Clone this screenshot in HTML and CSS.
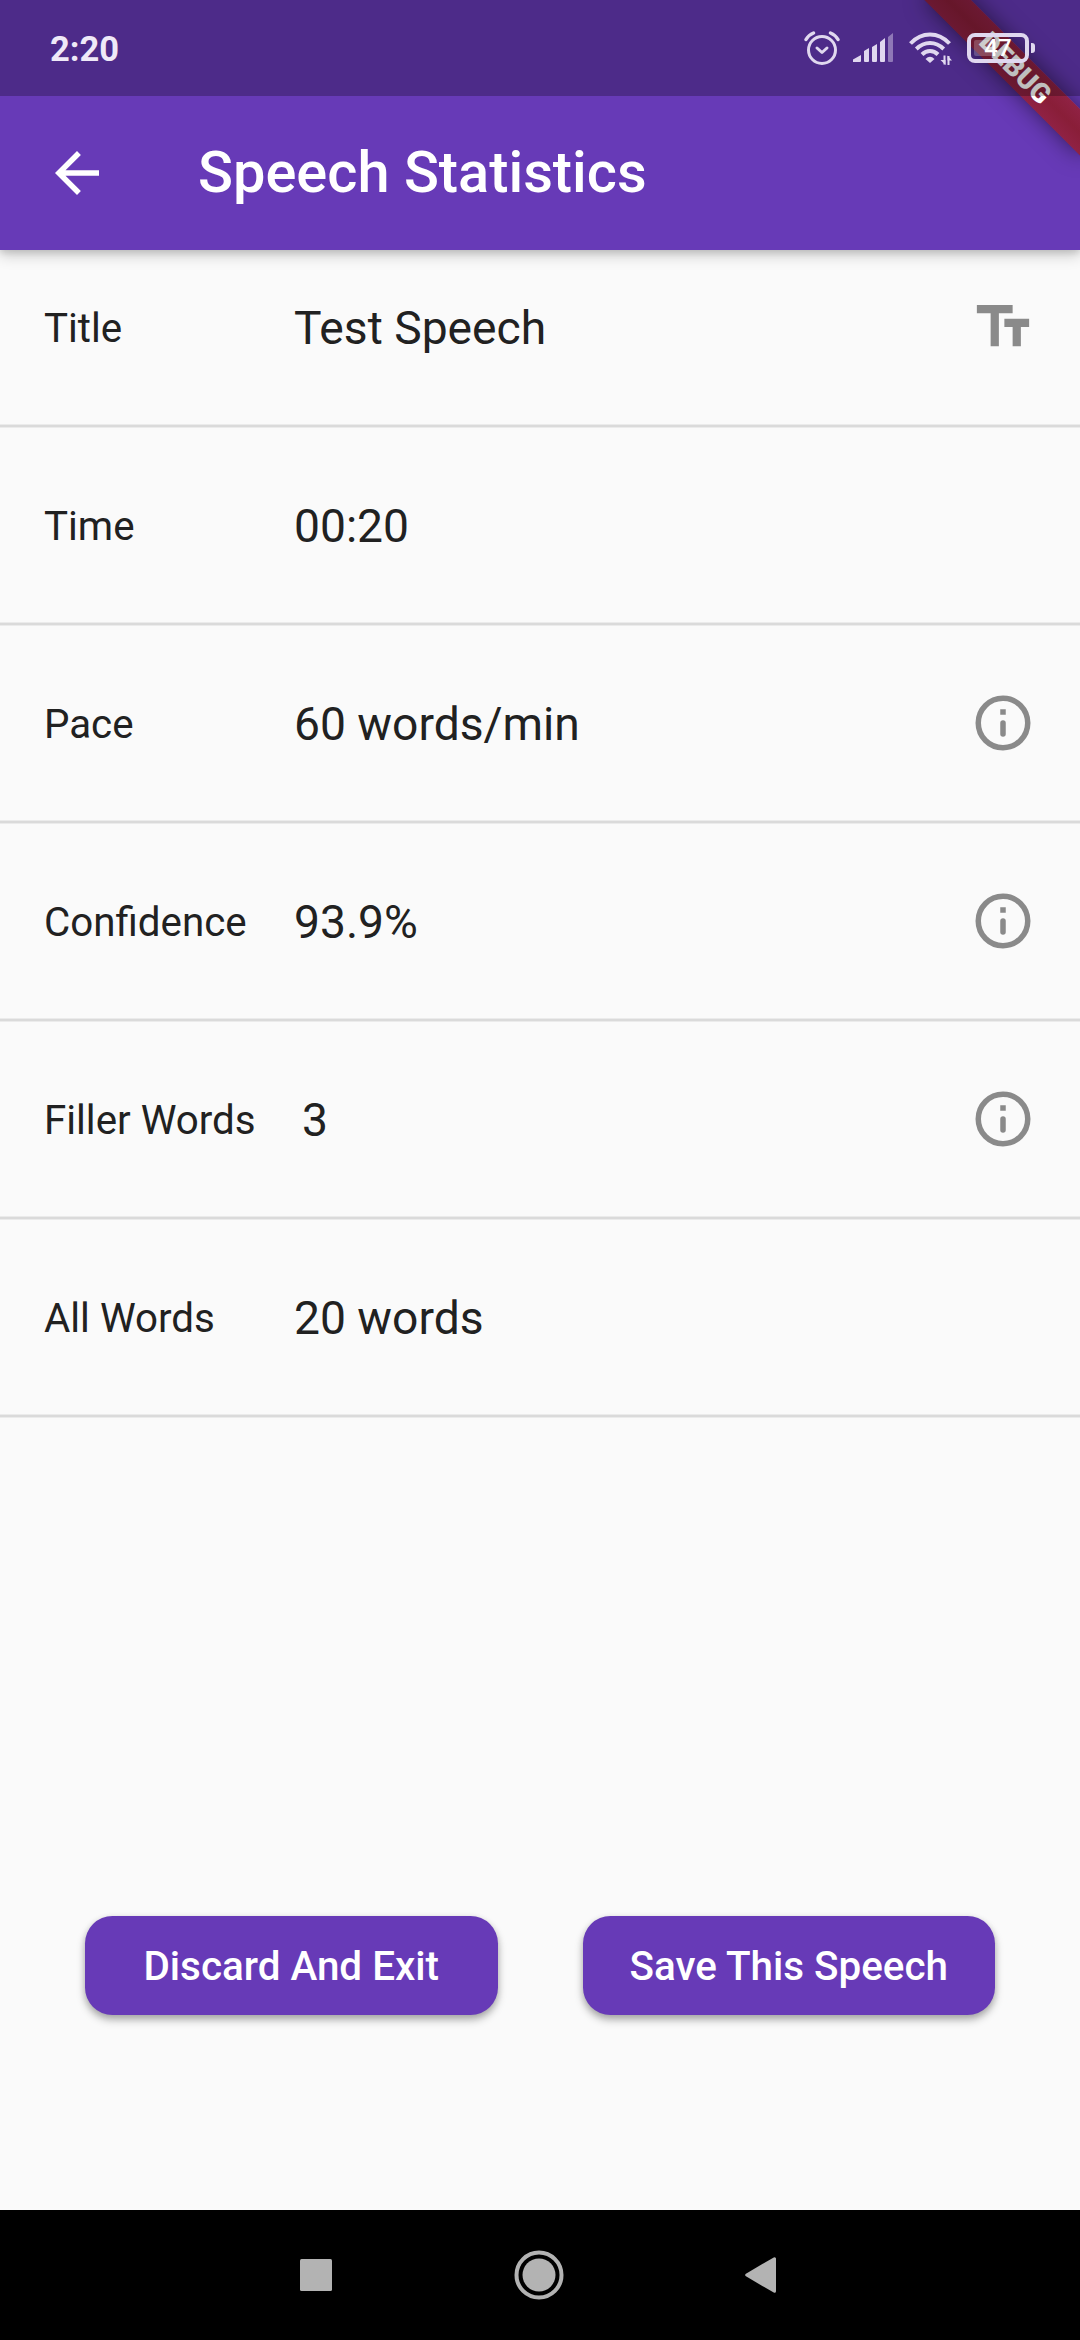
FILE: index.html
```html
<!DOCTYPE html>
<html lang="en">
<head>
<meta charset="utf-8">
<title>Speech Statistics</title>
<link rel="stylesheet" href="styles.css">
</head>
<body>
<div class="screen">
  <header class="header">
    <div class="banner"><span class="banner-text">DEBUG</span></div>
    <div class="status-bar">
      <span class="clock">2:20</span>
      <div class="status-icons">
        <svg class="alarm" width="36" height="36" viewBox="0 0 36 36" fill="none" stroke="#e0d8ef" stroke-width="3" stroke-linecap="round" stroke-linejoin="round">
          <circle cx="18" cy="20" r="13.5"/>
          <path d="M13 18l5 4.500 5-4.500"/>
          <path d="M2 9.500Q4.500 5 9.500 3M34 9.500Q31.500 5 26.500 3" stroke-width="3.400"/>
        </svg>
        <svg class="signal" width="41" height="30" viewBox="0 0 41 30" fill="#e0d8ef">
          <path d="M0 29v-2.500L8 22v6q0 1-1 1zM11 18l5-3v13q0 1-1 1h-3q-1 0-1-1zM19 14l5-3v17q0 1-1 1h-3q-1 0-1-1zM27 9l5-4v23q0 1-1 1h-3q-1 0-1-1z"/>
          <path opacity=".45" d="M35 4l5-4v28q0 1-1 1h-3q-1 0-1-1z"/>
        </svg>
        <svg class="wifi" width="43" height="34" viewBox="0 0 43 34" fill="none" stroke="#e0d8ef" stroke-width="4">
          <path d="M1.500 11.500Q10 2.500 21 2.500T40.500 11.500M7.300 17Q13.500 11 21 11T34.700 17M13 22.500Q16.500 19 21 19T29 22.500"/>
          <path d="M16.500 27Q21 22.500 25.500 27L21 31z" fill="#e0d8ef" stroke="none"/>
          <path d="M35.500 23.500v9M39.500 33v-9" stroke-width="2"/>
          <path d="M31.500 28h5v5zM38.500 23.500v5H43z" fill="#e0d8ef" stroke="none"/>
        </svg>
        <div class="battery"><span class="battery-level"></span><span class="battery-text">47</span></div>
        <span class="battery-tip"></span>
      </div>
    </div>
    <div class="app-bar">
      <svg class="icon" viewBox="0 0 24 24" fill="#fff"><path d="M20 11H7.830l5.590-5.590L12 4l-8 8 8 8 1.410-1.410L7.830 13H20z"/></svg>
      <h1 class="app-title">Speech Statistics</h1>
    </div>
  </header>

  <main class="content">
    <div class="row row-first">
      <span class="label">Title</span><span class="value">Test Speech</span>
      <svg class="icon" viewBox="0 0 24 24" fill="#8a8a8a"><path d="M2.500 4v3h5v12h3V7h5V4zM21.500 9h-9v3h3v7h3v-7h3z"/></svg>
    </div>
    <div class="row"><span class="label">Time</span><span class="value">00:20</span></div>
    <div class="row">
      <span class="label">Pace</span><span class="value">60 words/min</span>
      <svg class="icon" viewBox="0 0 24 24"><circle cx="12" cy="12" r="9" fill="none" stroke="#8a8a8a" stroke-width="2"/><path d="M11 7h2v2h-2z" fill="#8a8a8a"/><path d="M12 12v4" stroke="#8a8a8a" stroke-width="2" stroke-linecap="round"/></svg>
    </div>
    <div class="row">
      <span class="label">Confidence</span><span class="value">93.9%</span>
      <svg class="icon" viewBox="0 0 24 24"><circle cx="12" cy="12" r="9" fill="none" stroke="#8a8a8a" stroke-width="2"/><path d="M11 7h2v2h-2z" fill="#8a8a8a"/><path d="M12 12v4" stroke="#8a8a8a" stroke-width="2" stroke-linecap="round"/></svg>
    </div>
    <div class="row">
      <span class="label label-wide">Filler Words</span><span class="value">3</span>
      <svg class="icon" viewBox="0 0 24 24"><circle cx="12" cy="12" r="9" fill="none" stroke="#8a8a8a" stroke-width="2"/><path d="M11 7h2v2h-2z" fill="#8a8a8a"/><path d="M12 12v4" stroke="#8a8a8a" stroke-width="2" stroke-linecap="round"/></svg>
    </div>
    <div class="row"><span class="label">All Words</span><span class="value">20 words</span></div>
    <div class="actions">
      <button class="action">Discard And Exit</button>
      <button class="action">Save This Speech</button>
    </div>
  </main>

  <nav class="nav-bar">
    <svg width="32" height="32" viewBox="0 0 32 32" fill="#b3b3b3"><rect width="32" height="32" rx="1.500"/></svg>
    <svg width="50" height="50" viewBox="0 0 50 50" fill="#b3b3b3"><circle cx="25" cy="25" r="16.500"/><circle cx="25" cy="25" r="22.500" fill="none" stroke="#b3b3b3" stroke-width="4"/></svg>
    <svg width="31" height="36" viewBox="0 0 31 36" fill="#b3b3b3" stroke="#b3b3b3" stroke-width="3" stroke-linejoin="round"><path d="M1.700 18L29.500 1.700v32.600z"/></svg>
  </nav>
</div>
</body>
</html>
```

FILE: styles.css
```css
* { box-sizing: border-box; }

body {
  margin: 0;
  font-family: Roboto, sans-serif;
  color: #212121;
}

.screen {
  width: 1080px;
  height: 2340px;
  display: flex;
  flex-direction: column;
  overflow: hidden;
  background: #fafafa;
}

.icon {
  width: 66px;
  height: 66px;
  flex: none;
}

/* Header: status bar and app bar share one surface */
.header {
  position: relative;
  z-index: 1;
  height: 250px;
  background: #673ab7;
  box-shadow: 0 3px 6px rgba(0, 0, 0, .1), 0 5px 14px rgba(0, 0, 0, .2);
}

.status-bar {
  position: relative;
  height: 96px;
  padding: 0 45px 0 50px;
  display: flex;
  align-items: center;
  justify-content: space-between;
  background: rgba(0, 0, 0, .25);
}

.clock {
  font-size: 34.5px;
  font-weight: 700;
  line-height: 40px;
  padding-top: 2px;
  color: #efe9f8;
}

.status-icons {
  display: flex;
  align-items: center;
}

.signal { margin-left: 13px; }
.wifi { margin: 2px 0 0 15px; }

.battery {
  position: relative;
  width: 62px;
  height: 30px;
  margin-left: 15px;
  border: 4px solid #e0d8ef;
  border-radius: 8px;
  display: flex;
  align-items: center;
  justify-content: center;
}

.battery-level {
  position: absolute;
  left: 3px;
  top: 3px;
  width: 22px;
  height: 16px;
  border-radius: 2px;
  background: rgba(255, 255, 255, .22);
}

.battery-text {
  font-size: 24px;
  font-weight: 500;
  line-height: 22px;
  color: #fff;
}

.battery-tip {
  width: 4px;
  height: 10px;
  margin-left: 2px;
  border-radius: 0 3px 3px 0;
  background: #e0d8ef;
}

.app-bar {
  height: 154px;
  padding-left: 44px;
  display: flex;
  align-items: center;
  gap: 88px;
}

.app-title {
  margin: 0 0 3px;
  font-size: 57.75px;
  font-weight: 500;
  line-height: 64px;
  color: #fff;
}

/* Corner ribbon */
.banner {
  position: absolute;
  left: 970px;
  top: 77px;
  width: 220px;
  height: 33px;
  padding-left: 5px;
  transform-origin: 110px -77px;
  transform: rotate(45deg);
  display: flex;
  align-items: center;
  justify-content: center;
  background:
    linear-gradient(rgba(183, 28, 28, .63), rgba(183, 28, 28, .63)),
    linear-gradient(rgba(0, 0, 0, .25), rgba(0, 0, 0, .43), rgba(0, 0, 0, .25));
  box-shadow: 0 0 22px rgba(0, 0, 0, .5);
}

.banner-text {
  font-size: 27.5px;
  font-weight: 900;
  line-height: 28px;
  color: #fff;
}

/* Statistics list */
.content {
  flex: 1;
  display: flex;
  flex-direction: column;
}

.row {
  height: 198px;
  padding: 0 44px 4px;
  display: flex;
  align-items: center;
  background: linear-gradient(#ebebeb 25%, #dadada 25% 75%, #ebebeb 75%) bottom / 100% 4px no-repeat;
}

.row-first {
  height: 178px;
  padding-bottom: 24px;
}

.label {
  width: 250px;
  margin-top: 4px;
  font-size: 40.3px;
  line-height: 48px;
  white-space: nowrap;
}

.label-wide { width: 258px; }

.value {
  flex: 1;
  margin-top: 3px;
  font-size: 46.2px;
  line-height: 55px;
}

.actions {
  margin-top: auto;
  margin-bottom: 195px;
  display: flex;
  justify-content: space-evenly;
}

.action {
  width: 412.5px;
  height: 99px;
  padding: 2px 0 0;
  border: 0;
  border-radius: 27.5px;
  font: 500 40.4px/48px Roboto, sans-serif;
  color: #fff;
  background: #673ab7;
  box-shadow: 0 5px 8px rgba(0, 0, 0, .28), 0 2px 6px rgba(0, 0, 0, .12);
}

/* System navigation */
.nav-bar {
  height: 130px;
  padding: 0 304px 0 300px;
  display: flex;
  align-items: center;
  justify-content: space-between;
  background: #000;
}
```
